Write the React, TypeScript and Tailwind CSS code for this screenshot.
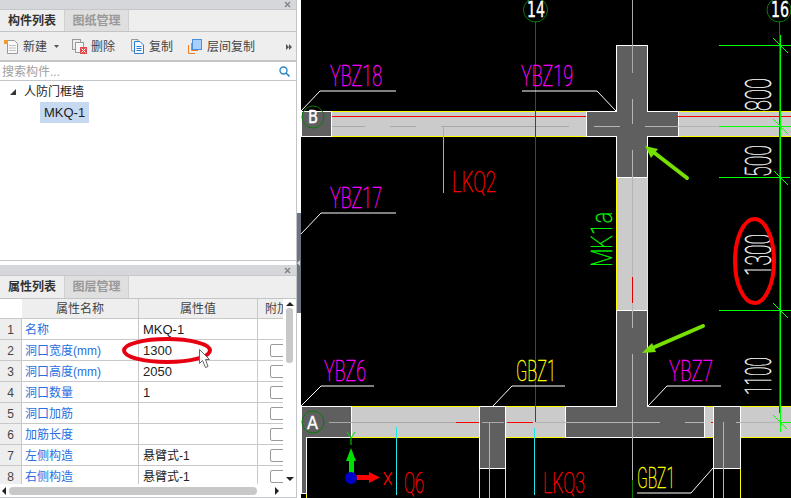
import type { ReactNode } from "react";

const rows = [
  { name: "名称", value: "MKQ-1", check: false },
  { name: "洞口宽度(mm)", value: "1300", check: true },
  { name: "洞口高度(mm)", value: "2050", check: true },
  { name: "洞口数量", value: "1", check: true },
  { name: "洞口加筋", value: "", check: true },
  { name: "加筋长度", value: "", check: true },
  { name: "左侧构造", value: "悬臂式-1", check: true },
  { name: "右侧构造", value: "悬臂式-1", check: true },
];

// x1,y1,x2,y2,colour
const lines: [number, number, number, number, string][] = [
  // beam B details
  [332, 116.5, 586, 116.5, "#ff0000"],
  [678, 116.5, 791, 116.5, "#ff0000"],
  [332, 126.5, 365, 126.5, "#a8a8a8"],
  [390, 126.5, 416, 126.5, "#a8a8a8"],
  [441, 126.5, 569, 126.5, "#a8a8a8"],
  [594, 126.5, 620, 126.5, "#b4b4b4"],
  [645, 126.5, 719, 126.5, "#b4b4b4"],
  // axis 14
  [535.5, 21, 535.5, 423, "#e00000"],
  // vertical centre line
  [632.5, 0, 632.5, 73, "#a8a8a8"],
  [632.5, 99, 632.5, 124, "#b4b4b4"],
  [632.5, 150, 632.5, 328, "#b4b4b4"],
  [632.5, 354, 632.5, 480, "#b4b4b4"],
  [632.5, 480, 632.5, 498, "#0a7a0a"],
  [632.5, 277, 632.5, 303, "#e00000"],
  // beam A details
  [329, 422.5, 456, 422.5, "#a8a8a8"],
  [456, 422.5, 479, 422.5, "#ff0000"],
  [482, 422.5, 504, 422.5, "#a8a8a8"],
  [507, 422.5, 533, 422.5, "#ff0000"],
  [535, 422.5, 660, 422.5, "#b4b4b4"],
  [685, 422.5, 704, 422.5, "#b4b4b4"],
  [711, 422.5, 713, 422.5, "#ff0000"],
  [736, 422.5, 780, 422.5, "#b4b4b4"],
  [489.5, 423, 489.5, 498, "#b4b4b4"],
  [723.5, 422, 723.5, 498, "#b4b4b4"],
  // cyan marks
  [443.5, 127, 443.5, 193, "#22e6e6"],
  [396.5, 427, 396.5, 495, "#22e6e6"],
  [534.5, 428, 534.5, 495, "#22e6e6"],
  // dimension lines
  [779.5, 21, 779.5, 413, "#ff0000"],
  [780.5, 35, 780.5, 432, "#00ff00"],
  [719, 45.5, 791, 45.5, "#00ff00"],
  [719, 126.5, 791, 126.5, "#00ff00"],
  [719, 177.5, 790, 177.5, "#00ff00"],
  [719, 310.5, 791, 310.5, "#00ff00"],
  [780, 422.5, 791, 422.5, "#00ff00"],
  [773, 38, 788, 53, "#00ff00"],
  [773, 119, 788, 134, "#00ff00"],
  [774, 171, 788, 185, "#00ff00"],
  [773, 303, 788, 318, "#00ff00"],
  [773, 415, 787, 429, "#00ff00"],
];

const leaders = [
  "301,111 320,91 396,91",
  "522,91 597,91 616,111",
  "301,234 321,213 396,213",
  "301,406 321,386 374,386",
  "493,406 512,386 565,386",
  "648,406 667,386 721,386",
  "637,493 691,493 713,468",
];

const labels = [
  { t: "YBZ18", x: 330, y: 86, w: 52, h: 21, c: "#ff00ff" },
  { t: "YBZ19", x: 521, y: 86, w: 52, h: 21, c: "#ff00ff" },
  { t: "YBZ17", x: 330, y: 208, w: 52, h: 21, c: "#ff00ff" },
  { t: "YBZ6", x: 324, y: 381, w: 42, h: 21, c: "#ff00ff" },
  { t: "YBZ7", x: 669, y: 381, w: 44, h: 21, c: "#ff00ff" },
  { t: "GBZ1", x: 516, y: 381, w: 40, h: 21, c: "#ffff00" },
  { t: "GBZ1", x: 637, y: 488, w: 38, h: 21, c: "#ffff00" },
  { t: "LKQ2", x: 452, y: 192, w: 44, h: 21, c: "#ff0000" },
  { t: "LKQ3", x: 543, y: 493, w: 42, h: 21, c: "#ff0000" },
  { t: "Q6", x: 404, y: 493, w: 20, h: 21, c: "#ff0000" },
];

const dims = [
  { t: "800", right: 771, bottom: 111, len: 33, h: 26, c: "#ffffff" },
  { t: "500", right: 771, bottom: 177, len: 32, h: 26, c: "#ffffff" },
  { t: "1300", right: 771, bottom: 276, len: 42, h: 26, c: "#ffffff" },
  { t: "1100", right: 771, bottom: 395, len: 38, h: 26, c: "#ffffff" },
  { t: "MK1a", right: 612, bottom: 267, len: 55, h: 21, c: "#00ff00" },
];

function CadText({ t, c, w, h, transform, x, y }: { t: string; c: string; w: number; h: number; transform?: string; x?: number; y?: number }) {
  return (
    <text
      x={x ?? 0}
      y={y ?? 0}
      transform={transform}
      fontFamily="Roboto, sans-serif"
      fontWeight={100}
      fontSize={h / 0.71}
      textLength={w}
      lengthAdjust="spacingAndGlyphs"
      fill={c}
      stroke={c}
      strokeWidth={0.45}
    >
      {t}
    </text>
  );
}

function Bubble({ cx, cy, r, t, x, y, w, h }: { cx: number; cy: number; r: number; t: string; x: number; y: number; w: number; h: number }) {
  return (
    <>
      <circle cx={cx} cy={cy} r={r} fill="none" stroke="#0a7a0a" strokeWidth={1} />
      <text x={x} y={y} fontFamily="'DejaVu Sans', sans-serif" fontSize={h / 0.73} textLength={w} lengthAdjust="spacingAndGlyphs" fill="#fff" stroke="#fff" strokeWidth={0.4}>
        {t}
      </text>
    </>
  );
}

function Column({ x, y, w, h }: { x: number; y: number; w: number; h: number }) {
  return <rect x={x + 0.5} y={y + 0.5} width={w} height={h} fill="#5f5f5f" stroke="#fff" strokeWidth={1} />;
}

function CadCanvas() {
  return (
    <svg className="h-[498px] w-[490px] shrink-0 bg-black" viewBox="301 0 490 498" shapeRendering="crispEdges">
      {/* walls */}
      <rect x={301} y={111} width={490} height={25} fill="#cbcbcb" />
      <rect x={301} y={406} width={490} height={31} fill="#cbcbcb" />
      <rect x={616} y={177} width={31} height={133} fill="#cbcbcb" />
      <path d="M301 111.5H791M301 136.5H791M301 406.5H791M301 437.5H791M616.5 177V310M647.5 177V310M306.5 493V498M479.5 468V498M505.5 468V498M713.5 468V498M740.5 468V498" stroke="#ffff00" fill="none" />

      {/* columns */}
      <Column x={301} y={111} w={30} h={25} />
      <path
        d="M616.5 45.5H647.5V111.5H678.5V136.5H647.5V177.5H616.5V136.5H586.5V111.5H616.5Z"
        fill="#5f5f5f"
        stroke="#fff"
      />
      <path
        d="M616.5 310.5H647.5V406.5H704.5V437.5H565.5V406.5H616.5Z"
        fill="#5f5f5f"
        stroke="#fff"
      />
      <path d="M301 406.5H351.5V437.5H306.5V493.5H301Z" fill="#5f5f5f" stroke="#fff" />
      <Column x={479} y={406} w={26} h={62} />
      <Column x={713} y={406} w={27} h={62} />

      {lines.map(([x1, y1, x2, y2, c], i) => (
        <line key={i} x1={x1} y1={y1} x2={x2} y2={y2} stroke={c} strokeWidth={1} shapeRendering={x1 !== x2 && y1 !== y2 ? "auto" : "crispEdges"} />
      ))}

      <g shapeRendering="auto">
        {leaders.map((p) => (
          <polyline key={p} points={p} fill="none" stroke="#fff" strokeWidth={1} />
        ))}

        {labels.map((l, i) => (
          <CadText key={i} t={l.t} c={l.c} w={l.w} h={l.h} x={l.x} y={l.y} />
        ))}
        {dims.map((d) => (
          <CadText key={d.t} t={d.t} c={d.c} w={d.len} h={d.h} transform={`translate(${d.right} ${d.bottom}) rotate(-90)`} />
        ))}

        <Bubble cx={535.5} cy={10} r={12} t="14" x={527} y={17} w={18} h={15} />
        <Bubble cx={779} cy={10} r={12} t="16" x={771} y={17} w={18} h={15} />
        <Bubble cx={313} cy={117} r={11} t="B" x={308} y={123} w={10} h={13} />
        <Bubble cx={313} cy={422} r={11} t="A" x={307} y={429} w={11} h={13} />

        {/* red ring */}
        <ellipse cx={754.5} cy={261} rx={19.5} ry={42} fill="none" stroke="#ff0000" strokeWidth={4} />

        {/* green arrows */}
        <line x1={687} y1={178} x2={652} y2={151} stroke="#76e000" strokeWidth={4} strokeLinecap="round" />
        <polygon points="645,146 658,149 651,158" fill="#76e000" />
        <line x1={703} y1={326} x2={650} y2={349} stroke="#76e000" strokeWidth={4} strokeLinecap="round" />
        <polygon points="642,353 652,343 656,352" fill="#76e000" />

        {/* axis gizmo */}
        <rect x={349} y={460} width={5} height={14} fill="#00e000" />
        <polygon points="351,448 356,461 346,461" fill="#00e000" />
        <path d="M347 432L351 438L355 432M351 438V445" stroke="#00e000" fill="none" />
        <rect x={356} y={475} width={14} height={5} fill="#ff0000" />
        <polygon points="380,477.5 369,472 369,483" fill="#ff0000" />
        <path d="M384 472L392 485M392 472L384 485" stroke="#ff0000" strokeWidth={1.4} fill="none" />
        <circle cx={351} cy={478} r={6} fill="#0000c8" />
      </g>
    </svg>
  );
}

function CloseBar({ height }: { height: string }) {
  return (
    <div className={`flex shrink-0 items-center justify-end border-b border-[#c4c6c9] bg-[#d5d7db] pr-[5px] ${height}`}>
      <svg width="7" height="7" viewBox="0 0 7 7">
        <path d="M1 1L6 6M6 1L1 6" stroke="#888" strokeWidth="1.6" />
      </svg>
    </div>
  );
}

function Tabs({ active, other, height }: { active: string; other: string; height: string }) {
  return (
    <div className={`flex shrink-0 border-b border-[#c2c4c6] bg-[#eeeeee] text-xs ${height}`}>
      <div className="flex w-[64px] items-center justify-center font-bold text-[#333]">{active}</div>
      <div className="flex w-[65px] items-center justify-center border-r border-l border-[#d0d0d0] bg-[#dfdfdf] font-bold text-[#999]">{other}</div>
    </div>
  );
}

function Tool({ icon, label, width }: { icon: ReactNode; label: string; width: string }) {
  return (
    <div className={`flex items-center ${width}`}>
      {icon}
      <span className="text-xs text-[#444]">{label}</span>
    </div>
  );
}

function TopPanel() {
  return (
    <div className="flex h-[261px] shrink-0 flex-col border-b border-[#c4c6c9]">
      <CloseBar height="h-[10px]" />
      <Tabs active="构件列表" other="图纸管理" height="h-[22px]" />
      <div className="flex h-[30px] shrink-0 items-center border-b-2 border-[#c4c6c9] bg-[#eeeeee] pt-[1px] pl-[4px]">
        <div className="flex w-[68px] items-center">
          <svg className="mr-[4px]" width="15" height="16" viewBox="0 0 15 16">
            <path d="M3.5 1.5H10.5L13.5 4.5V14.5H3.5Z" fill="#fafafa" stroke="#9a9a9a" />
            <path d="M5 6.5H12M5 9H12M5 11.5H12" stroke="#c0c0c0" />
            <rect x="0" y="1" width="4" height="4" fill="#f39a2b" />
          </svg>
          <span className="text-xs text-[#444]">新建</span>
          <svg className="ml-[7px]" width="5" height="3" viewBox="0 0 5 3">
            <path d="M0 0H5L2.5 3Z" fill="#555" />
          </svg>
        </div>
        <Tool
          width="w-[59px]"
          label="删除"
          icon={
            <svg className="mr-[4px]" width="15" height="15" viewBox="0 0 15 15">
              <rect x="0.5" y="0.5" width="8" height="10" fill="#eee" stroke="#999" />
              <rect x="3.5" y="3.5" width="8" height="10" fill="#f6f6f6" stroke="#999" />
              <rect x="8" y="8" width="7" height="7" fill="#e04a4a" />
              <path d="M9.5 9.5L13.5 13.5M13.5 9.5L9.5 13.5" stroke="#fff" />
            </svg>
          }
        />
        <Tool
          width="w-[57px]"
          label="复制"
          icon={
            <svg className="mr-[5px]" width="13" height="15" viewBox="0 0 13 15">
              <path d="M0.5 0.5H7V12H0.5Z" fill="#eee" stroke="#999" />
              <path d="M3.5 2.5H9L12.5 6V14.5H3.5Z" fill="#f4f9ff" stroke="#2d7fd3" />
              <path d="M5.5 7.5H10.5M5.5 9.5H10.5M5.5 11.5H10.5" stroke="#2d7fd3" />
            </svg>
          }
        />
        <Tool
          width="w-[81px]"
          label="层间复制"
          icon={
            <svg className="mr-[5px]" width="14" height="15" viewBox="0 0 14 15">
              <path d="M3.5 4V11.5H10M0.5 6V14.5H7" fill="none" stroke="#ef7d22" />
              <rect x="4.5" y="0.5" width="9" height="10" fill="#a9cffc" stroke="#4a8fdc" />
            </svg>
          }
        />
        <svg className="ml-[17px]" width="6" height="6" viewBox="0 0 6 6">
          <path d="M0 0L3 3L0 6ZM3 0L6 3L3 6Z" fill="#555" />
        </svg>
      </div>
      <div className="flex h-[19px] shrink-0 items-center justify-between border-b border-[#c4c6c9] bg-white pt-[1px] pr-[6px] pl-[2px]">
        <span className="text-xs text-[#a0a0a0]">搜索构件...</span>
        <svg width="11" height="11" viewBox="0 0 11 11">
          <circle cx="4.5" cy="4.5" r="3.5" fill="none" stroke="#2d88c6" strokeWidth="1.4" />
          <path d="M7 7L10.5 10.5" stroke="#2d88c6" strokeWidth="1.6" />
        </svg>
      </div>
      <div className="flex-1 bg-white">
        <div className="flex h-[21px] items-center pt-[1px] pl-[10px]">
          <svg className="mr-[8px]" width="6" height="6" viewBox="0 0 6 6">
            <path d="M6 0V6H0Z" fill="#333" />
          </svg>
          <span className="text-xs text-[#222]">人防门框墙</span>
        </div>
        <div className="ml-[40px] flex h-[21px] w-[49px] items-center bg-[#c6d9f1] pl-[4px] text-[13px] text-[#222]">MKQ-1</div>
      </div>
    </div>
  );
}

function PropertyTable() {
  return (
    <div className="relative flex min-h-0 flex-1 flex-col overflow-hidden bg-white">
      <div className="flex min-h-0 flex-1">
        <div className="w-[283px] shrink-0 overflow-hidden">
          <div className="flex h-[20px] border-b border-[#c8c8c8] text-xs text-[#444]">
            <div className="w-[22px] shrink-0 bg-white" />
            <div className="flex w-[117px] shrink-0 items-center justify-center border-r border-[#c8c8c8] bg-[#eeeeee]">属性名称</div>
            <div className="flex w-[119px] shrink-0 items-center justify-center border-r border-[#c8c8c8] bg-[#eeeeee]">属性值</div>
            <div className="flex flex-1 items-center overflow-hidden whitespace-nowrap bg-[#eeeeee] pl-[7px]">附加</div>
          </div>
          {rows.map((row, i) => (
            <div key={i} className="flex h-[21px] border-b border-[#c8c8c8] text-[13px]">
              <div className="flex w-[22px] shrink-0 items-center justify-center border-r border-[#c8c8c8] bg-[#eeeeee] pt-[1px] text-xs text-[#444]">{i + 1}</div>
              <div className="flex w-[117px] shrink-0 items-center border-r border-[#c8c8c8] pt-[1px] pl-[3px] text-xs text-[#2a6fe0]">{row.name}</div>
              <div className="flex w-[119px] shrink-0 items-center border-r border-[#c8c8c8] pt-[1px] pl-[4px] text-[#222]">
                <span className={row.value.startsWith("悬") ? "text-xs" : ""}>{row.value}</span>
              </div>
              <div className="flex flex-1 items-center overflow-hidden pl-[12px]">
                {row.check && <div className="h-[13px] w-[20px] shrink-0 rounded-[2px] border border-[#9a9a9a] bg-white" />}
              </div>
            </div>
          ))}
        </div>
        <div className="relative w-[13px] shrink-0 bg-white">
          <svg className="mx-auto mt-[3px]" width="8" height="4" viewBox="0 0 8 4">
            <path d="M4 0L8 4H0Z" fill="#222" />
          </svg>
          <div className="mx-auto mt-[2px] h-[55px] w-[7px] rounded-[3px] bg-[#c8c8c8]" />
          <svg className="absolute bottom-[3px] left-[3px]" width="8" height="4" viewBox="0 0 8 4">
            <path d="M0 0H8L4 4Z" fill="#222" />
          </svg>
        </div>
      </div>
      <div className="flex h-[13px] shrink-0 items-center pl-[2px]">
        <svg width="4" height="8" viewBox="0 0 4 8">
          <path d="M4 0V8L0 4Z" fill="#222" />
        </svg>
        <div className="ml-[3px] h-[8px] w-[248px] rounded-[4px] bg-[#c8c8c8]" />
        <svg className="ml-[18px]" width="4" height="8" viewBox="0 0 4 8">
          <path d="M0 0V8L4 4Z" fill="#222" />
        </svg>
      </div>
    </div>
  );
}

export default function App() {
  return (
    <div className="relative flex h-[498px] w-[791px] overflow-hidden bg-white font-['Liberation_Sans','Noto_Sans_CJK_SC',sans-serif]">
      <div className="flex h-full w-[297px] shrink-0 flex-col border-r border-[#c4c6c9]">
        <TopPanel />
        <div className="h-[4px] shrink-0 bg-white" />
        <div className="flex min-h-0 flex-1 flex-col border-b border-[#c4c6c9]">
          <CloseBar height="h-[11px]" />
          <Tabs active="属性列表" other="图层管理" height="h-[23px]" />
          <PropertyTable />
        </div>
      </div>

      {/* splitter */}
      <div className="flex w-[4px] shrink-0 flex-col bg-white">
        <div className="mt-[213px] flex h-[100px] items-center bg-[#6b7580]">
          <svg width="3" height="6" viewBox="0 0 3 6">
            <path d="M3 0V6L0 3Z" fill="#d8dce0" />
          </svg>
        </div>
      </div>

      <CadCanvas />

      {/* red ring and pointer over the table */}
      <svg className="absolute top-[336px] left-[121px]" width="92" height="29" viewBox="0 0 92 29">
        <ellipse cx="46" cy="14.5" rx="43" ry="11.5" fill="none" stroke="#e60012" strokeWidth="4" />
      </svg>
      <svg className="absolute top-[349px] left-[198px]" width="14" height="20" viewBox="0 0 14 20">
        <path d="M1.5 0.5V14.5L4.5 11.5L7.5 18.5L10 17.5L7.5 10.5H11.5Z" fill="#fff" stroke="#666" />
      </svg>
    </div>
  );
}
